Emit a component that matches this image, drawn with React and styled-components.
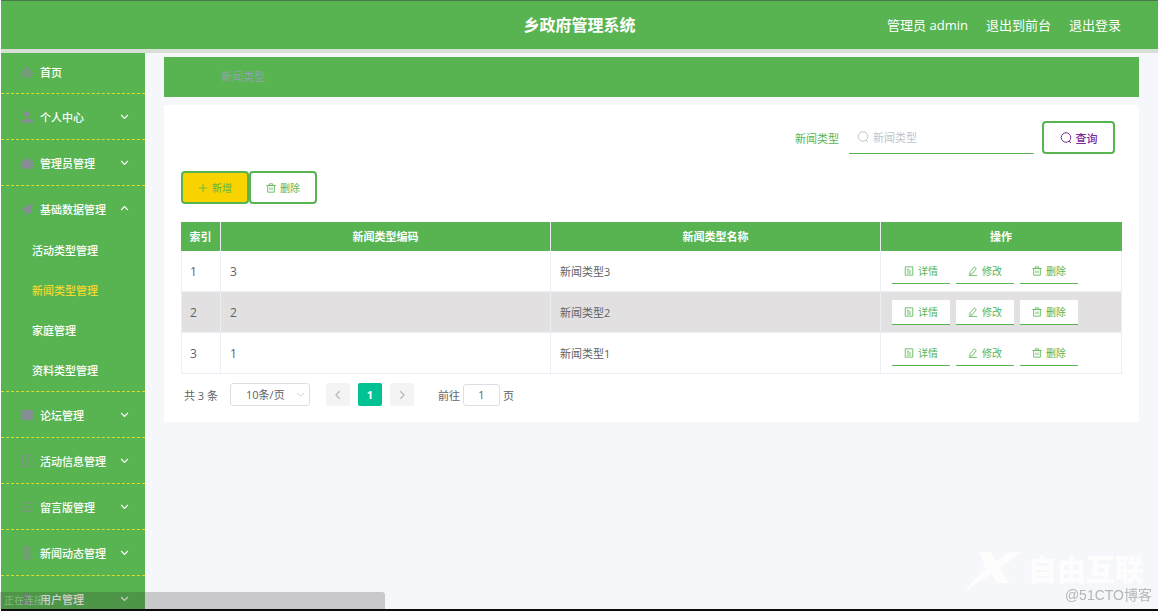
import React, { useState } from 'react'
import styled, { createGlobalStyle } from 'styled-components'

const GREEN = '#58b450'

const GlobalStyle = createGlobalStyle`
  * {
    box-sizing: border-box;
  }
  body {
    margin: 0;
    background: #fff;
    color: #606266;
    font-family: 'Open Sans', 'Noto Sans CJK SC', sans-serif;
    font-size: 11px;
  }
  button, input, select {
    font-family: inherit;
    font-size: inherit;
    color: inherit;
    margin: 0;
    outline: none;
  }
  button, select {
    cursor: pointer;
  }
  a {
    color: inherit;
    text-decoration: none;
  }
`

const Page = styled.div`
  display: flex;
  flex-direction: column;
  height: 100vh;
  padding: 0 3px 0 1px;
  overflow: hidden;
`

const Header = styled.header`
  display: grid;
  grid-template-columns: 1fr auto 1fr;
  align-items: center;
  flex: none;
  height: 53px;
  background: ${GREEN};
  border-top: 1px solid #47784a;
  border-bottom: 4px solid #d8dfd6;
  color: #fff;
`

const Title = styled.h1`
  grid-column: 2;
  margin: 0;
  font-size: 16px;
  line-height: 24px;
`

const HeaderLinks = styled.div`
  display: flex;
  justify-content: flex-end;
  gap: 18px;
  padding-right: 37px;
  font-size: 13px;
  line-height: 20px;
`

const Body = styled.div`
  display: flex;
  flex: 1;
  min-height: 0;
  background: #f6f7fa;
  border-bottom: 2px solid #0c0c0c;
`

const Sidebar = styled.nav`
  flex: none;
  width: 144px;
  overflow: hidden;
  background: ${GREEN};
  color: #fff;
  font-weight: 500;
`

const MenuGroup = styled.div`
  border-bottom: 1px dashed #dfdc28;
`

const MenuButton = styled.button`
  display: flex;
  align-items: center;
  width: 100%;
  height: ${props => props.$short ? 40 : 45}px;
  padding: 0 16px ${props => props.$short ? 2 : 0}px 19px;
  border: 0;
  background: none;
  font-weight: 500;
  text-align: left;

  > span {
    flex: 1;
    margin-left: 6px;
    white-space: nowrap;
  }
`

const SubLink = styled.a`
  display: block;
  padding-left: 31px;
  line-height: 40px;
  ${props => props.$active && `
    color: #f4d730;
  `}
`

const Svg = styled.svg`
  flex: none;
  width: ${props => props.$size}px;
  height: ${props => props.$size}px;
  fill: none;
  stroke: currentColor;
  stroke-width: ${props => props.$weight};
`

const MenuIcon = styled(Svg)`
  color: #8c8c9c;
  opacity: ${props => props.$faint ? 0.7 : 0.9};
`

const Main = styled.main`
  flex: 1;
  min-width: 0;
  padding: 4px 19px 0;
`

const Breadcrumb = styled.div`
  padding-left: 57px;
  background: ${GREEN};
  color: #8fa3b4;
  line-height: 40px;
`

const Card = styled.section`
  margin-top: 8px;
  padding: 16px 17px;
  background: #fff;
`

const SearchForm = styled.form`
  display: flex;
  justify-content: flex-end;
  align-items: center;
  gap: 8px;
  padding-right: 7px;
`

const SearchLabel = styled.label`
  padding-right: 2px;
  color: ${GREEN};
`

const SearchBox = styled.div`
  display: flex;
  align-items: center;
  gap: 4px;
  width: 185px;
  height: 33px;
  padding-left: 8px;
  border-bottom: 1px solid ${GREEN};
  color: #c0c4cc;

  input {
    flex: 1;
    min-width: 0;
    padding: 0;
    border: 0;
    background: none;
    color: #606266;
  }
  input::placeholder {
    color: #c0c4cc;
    opacity: 1;
  }
`

const Button = styled.button`
  display: flex;
  justify-content: center;
  align-items: center;
  gap: 4px;
  width: 68px;
  height: 33px;
  padding: 0;
  border: 2px solid ${GREEN};
  border-radius: 4px;
  background: ${props => props.$primary ? '#f9d300' : '#fff'};
  color: ${GREEN};
  font-size: 10px;
`

const SearchButton = styled(Button)`
  width: 73px;
  color: #7b2a9c;
  font-size: 11px;
  font-weight: 500;
`

const Toolbar = styled.div`
  display: flex;
  margin: 17px 0 18px;
`

const Table = styled.table`
  width: 100%;
  table-layout: fixed;
  border-collapse: separate;
  border-spacing: 0;

  th {
    height: 29px;
    padding: 0 0 2px;
    background: ${GREEN};
    border-right: 1px solid #ebeef5;
    color: #fff;
    font-weight: 700;
  }
  th:last-child {
    border-right-color: ${GREEN};
  }
  td {
    height: 41px;
    padding: 0 9px;
    border-right: 1px solid #ebeef5;
    border-bottom: 1px solid #ebeef5;
    font-size: 12px;
  }
  td:first-child {
    padding: 0 8px;
    border-left: 1px solid #ebeef5;
  }
  td:nth-child(3) {
    font-size: 11px;
  }
  tbody tr:nth-child(even) td {
    background: #e2e0e1;
  }
`

const Actions = styled.div`
  display: flex;
  gap: 6px;
  padding-left: 2px;
`

const ActionButton = styled.button`
  display: flex;
  justify-content: center;
  align-items: center;
  gap: 4px;
  width: 58px;
  height: 25px;
  padding: 0;
  border: 0;
  border-bottom: 1px solid ${GREEN};
  background: #fff;
  color: ${GREEN};
  font-size: 10px;
`

const Pagination = styled.div`
  display: flex;
  align-items: center;
  height: 23px;
  margin-top: 9px;
  padding-left: 3px;
`

const PageSize = styled.div`
  position: relative;
  margin: 0 16px 0 12px;

  select {
    display: block;
    width: 80px;
    height: 23px;
    padding: 0 0 0 15px;
    border: 1px solid #dcdfe6;
    border-radius: 3px;
    background: #fff;
    appearance: none;
  }
  svg {
    position: absolute;
    top: 7px;
    right: 5px;
    color: #c0c4cc;
    pointer-events: none;
  }
`

const Pager = styled.div`
  display: flex;
  gap: 8px;
  margin-right: 24px;
`

const PageButton = styled.button`
  display: flex;
  justify-content: center;
  align-items: center;
  width: 24px;
  height: 23px;
  padding: 0;
  border: 0;
  border-radius: 2px;
  background: ${props => props.$active ? '#00c292' : '#f4f4f5'};
  color: ${props => props.$active ? '#fff' : '#b4b8c0'};
  font-weight: 700;
`

const Jumper = styled.label`
  display: flex;
  align-items: center;
  gap: 3px;

  input {
    width: 37px;
    height: 22px;
    padding: 0;
    border: 1px solid #dcdfe6;
    border-radius: 3px;
    text-align: center;
  }
`

const StatusBar = styled.div`
  position: fixed;
  left: 0;
  bottom: 2px;
  width: 385px;
  height: 17px;
  padding-left: 4px;
  border-top-right-radius: 3px;
  background: rgba(40, 40, 40, 0.22);
  color: #85b980;
  font-size: 10px;
  line-height: 17px;
`

const Watermark = styled.div`
  position: fixed;
  right: 9px;
  bottom: 6px;
  display: flex;
  flex-direction: column;
  align-items: flex-end;
  color: #b4b6b9;
  font-family: 'Liberation Sans', 'Noto Sans CJK SC', sans-serif;
  font-size: 14px;
  line-height: 20px;
  pointer-events: none;
`

const Brand = styled.div`
  display: flex;
  align-items: center;
  gap: 6px;
  padding-right: 8px;
  color: #fdfdfe;
  font-size: 29px;
  font-weight: 900;
  line-height: 26px;

  svg {
    width: 58px;
    height: 44px;
    margin: -8px 0;
    fill: currentColor;
  }
`

const icons = {
  down: <path d="M3 8l9 9 9-9" />,
  up: <path d="M3 16l9-9 9 9" />,
  left: <path d="M16 3l-9 9 9 9" />,
  right: <path d="M8 3l9 9-9 9" />,
  search: <><circle cx="12" cy="11" r="9.5" /><path d="M18 18l4 4" /></>,
  plus: <path d="M12 2v20M2 12h20" />,
  trash: <path d="M1 6h22M8 6V2h8v4M4 6v16h16V6M9.500 11v6M14.500 11v6" />,
  detail: <path d="M3 2h18v20H3zM7 8h5M7 12h10M7 17h10" />,
  edit: <path d="M15 2l5 4-10 13-6 1 1-6zM2 23h20" />,
  home: <path fill="currentColor" stroke="none" d="M12 3L1 14l2 2 9-8 9 8 2-2zM12 11l-8 7v4h5v-5h6v5h5v-4z" />,
  user: <><circle fill="currentColor" cx="12" cy="7" r="4" /><path fill="currentColor" stroke="none" d="M2 22v-4l7-3h6l7 3v4z" /></>,
  briefcase: <path fill="currentColor" stroke="none" d="M2 8h6V4h8v4h6v14H2z" />,
  send: <path fill="currentColor" stroke="none" d="M22 2L2 12l6 3v8l4-5 6 3z" />,
  board: <path fill="currentColor" stroke="none" d="M2 3h20v18H2z" />,
  note: <path d="M4 3h16v18H4zM8 9h8M8 14h8" />,
  list: <path d="M2 5h20M2 12h20M2 19h20" />,
  phone: <path fill="currentColor" fillOpacity="0.5" d="M7 2h10v20H7z" />,
}

const Icon = ({ name, size = 10, weight = 2, as: Base = Svg, ...rest }) => (
  <Base viewBox="0 0 24 24" aria-hidden="true" $size={size} $weight={weight} {...rest}>
    {icons[name]}
  </Base>
)

const menus = [
  { title: '首页', icon: 'home', leaf: true },
  { title: '个人中心', icon: 'user' },
  { title: '管理员管理', icon: 'briefcase' },
  {
    title: '基础数据管理',
    icon: 'send',
    children: ['活动类型管理', '新闻类型管理', '家庭管理', '资料类型管理'],
  },
  { title: '论坛管理', icon: 'board' },
  { title: '活动信息管理', icon: 'note', faint: true },
  { title: '留言版管理', icon: 'list', faint: true },
  { title: '新闻动态管理', icon: 'phone', faint: true },
  { title: '用户管理', icon: 'user' },
]

const rows = [
  { code: 3, name: '新闻类型3' },
  { code: 2, name: '新闻类型2' },
  { code: 1, name: '新闻类型1' },
]

const Menu = () => {
  const [opened, setOpened] = useState('基础数据管理')
  const [active, setActive] = useState('新闻类型管理')

  return (
    <Sidebar>
      {menus.map(({ title, icon, leaf, faint, children }) => {
        const open = children && opened === title
        return (
          <MenuGroup key={title}>
            <MenuButton type="button" $short={leaf} onClick={() => setOpened(open ? '' : title)}>
              <Icon as={MenuIcon} name={icon} size={14} $faint={faint} />
              <span>{title}</span>
              {!leaf && <Icon name={open ? 'up' : 'down'} size={9} weight={3} />}
            </MenuButton>
            {open && children.map(item => (
              <SubLink key={item} href="#" $active={item === active} onClick={() => setActive(item)}>{item}</SubLink>
            ))}
          </MenuGroup>
        )
      })}
    </Sidebar>
  )
}

const App = () => (
  <>
    <GlobalStyle />
    <Page>
      <Header>
        <Title>乡政府管理系统</Title>
        <HeaderLinks>
          <span>管理员 admin</span>
          <a href="#">退出到前台</a>
          <a href="#">退出登录</a>
        </HeaderLinks>
      </Header>
      <Body>
        <Menu />
        <Main>
          <Breadcrumb>新闻类型</Breadcrumb>
          <Card>
            <SearchForm onSubmit={e => e.preventDefault()}>
              <SearchLabel htmlFor="type">新闻类型</SearchLabel>
              <SearchBox>
                <Icon name="search" size={12} />
                <input id="type" placeholder="新闻类型" />
              </SearchBox>
              <SearchButton type="submit"><Icon name="search" size={12} />查询</SearchButton>
            </SearchForm>
            <Toolbar>
              <Button type="button" $primary><Icon name="plus" />新增</Button>
              <Button type="button"><Icon name="trash" />删除</Button>
            </Toolbar>
            <Table>
              <colgroup>
                <col width="40" />
                <col />
                <col />
                <col width="241" />
              </colgroup>
              <thead>
                <tr>
                  <th>索引</th>
                  <th>新闻类型编码</th>
                  <th>新闻类型名称</th>
                  <th>操作</th>
                </tr>
              </thead>
              <tbody>
                {rows.map((row, i) => (
                  <tr key={row.code}>
                    <td>{i + 1}</td>
                    <td>{row.code}</td>
                    <td>{row.name}</td>
                    <td>
                      <Actions>
                        <ActionButton type="button"><Icon name="detail" />详情</ActionButton>
                        <ActionButton type="button"><Icon name="edit" />修改</ActionButton>
                        <ActionButton type="button"><Icon name="trash" />删除</ActionButton>
                      </Actions>
                    </td>
                  </tr>
                ))}
              </tbody>
            </Table>
            <Pagination>
              <span>共 3 条</span>
              <PageSize>
                <select aria-label="每页条数" defaultValue="10">
                  <option value="10">10条/页</option>
                  <option value="20">20条/页</option>
                </select>
                <Icon name="down" size={9} />
              </PageSize>
              <Pager>
                <PageButton type="button" aria-label="上一页"><Icon name="left" weight={3} /></PageButton>
                <PageButton type="button" $active>1</PageButton>
                <PageButton type="button" aria-label="下一页"><Icon name="right" weight={3} /></PageButton>
              </Pager>
              <Jumper>
                前往
                <input defaultValue="1" />
                页
              </Jumper>
            </Pagination>
          </Card>
        </Main>
      </Body>
    </Page>
    <StatusBar>正在连接</StatusBar>
    <Watermark>
      <Brand>
        <svg viewBox="0 0 58 44" aria-hidden="true">
          <path d="M15 3h12l5 10L45 3h13L36 19l10 15H33l-6-9C17 31 8 37 0 44c5-9 13-17 22-24z" />
        </svg>
        自由互联
      </Brand>
      @51CTO博客
    </Watermark>
  </>
)

export default App
